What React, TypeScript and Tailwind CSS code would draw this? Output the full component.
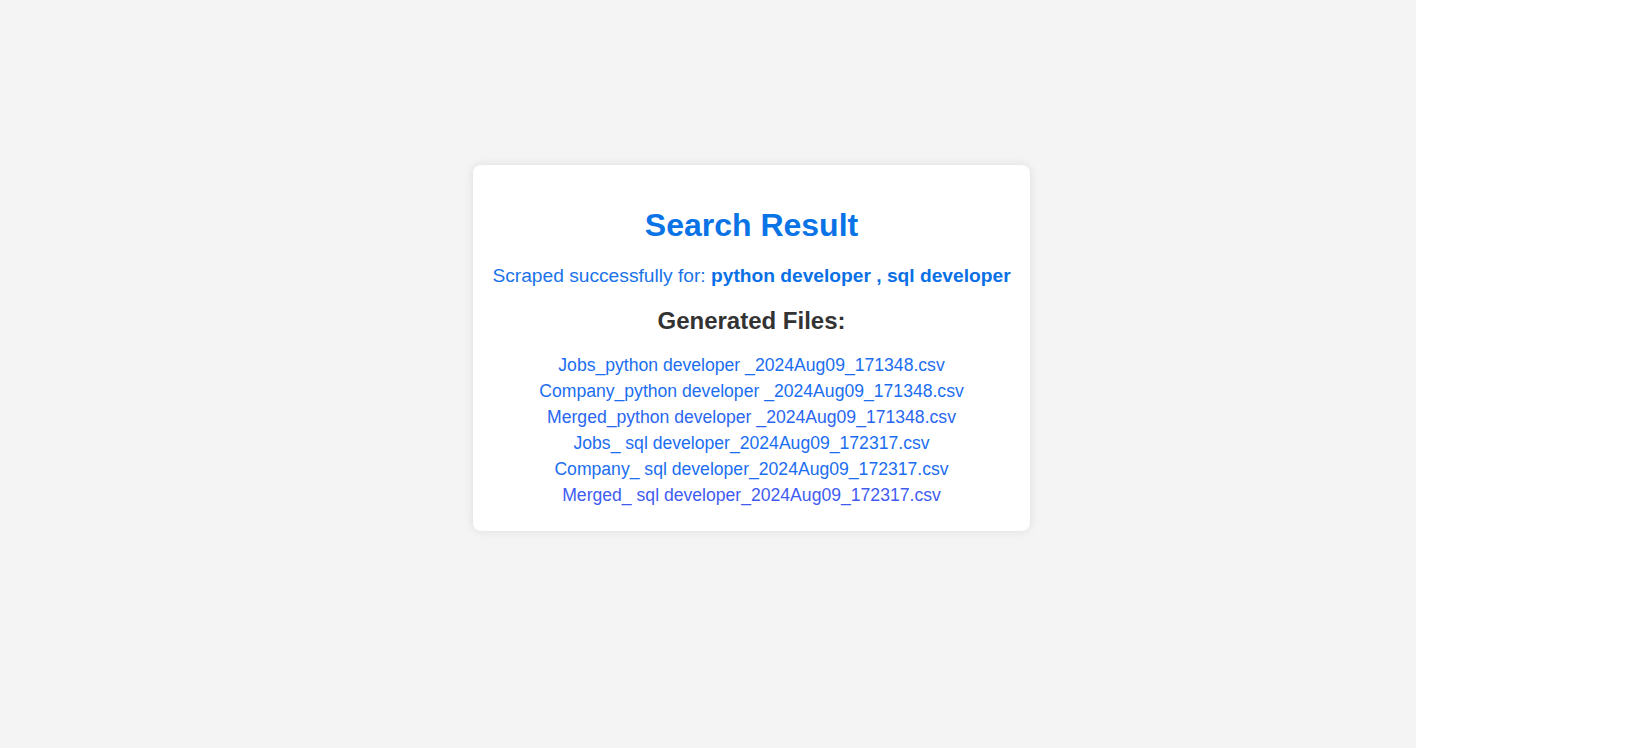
const files = [
  { name: 'Jobs_python developer _2024Aug09_171348.csv', color: 'text-[#1b6ef0]' },
  { name: 'Company_python developer _2024Aug09_171348.csv', color: 'text-[#1b6ef0]' },
  { name: 'Merged_python developer _2024Aug09_171348.csv', color: 'text-[#2a66f0]' },
  { name: 'Jobs_ sql developer_2024Aug09_172317.csv', color: 'text-[#1b6ef0]' },
  { name: 'Company_ sql developer_2024Aug09_172317.csv', color: 'text-[#1b6ef0]' },
  { name: 'Merged_ sql developer_2024Aug09_172317.csv', color: 'text-[#3f5cf2]' },
];

export default function App() {
  return (
    <div className="flex h-[748px] w-full bg-white font-['Liberation_Sans',Arial,sans-serif]">
      {/* page body */}
      <div className="h-full w-[1416px] bg-[#f4f4f4] pl-[473px] pt-[165px]">
        {/* result card */}
        <div className="w-[557px] rounded-lg bg-white px-5 pt-[21px] pb-[26px] text-center shadow-[0_0_10px_rgba(0,0,0,0.1)]">
          <h1 className="my-[21px] text-[32px] leading-[37px] font-bold text-[#0a73e6]">Search Result</h1>
          <p className="-mx-2 whitespace-nowrap text-[19.2px] leading-[22px] text-[#1a73e8]">
            Scraped successfully for: <strong className="font-bold text-[#0a70e6]">python developer , sql developer</strong>
          </p>
          <h2 className="mt-5 text-[24px] leading-[28px] font-bold text-[#333]">Generated Files:</h2>
          <ul className="mt-5 flex flex-col gap-[6.1px]">
            {files.map((f) => (
              <li key={f.name} className="text-[17.6px] leading-[20px]">
                <a href="#" className={f.color}>{f.name}</a>
              </li>
            ))}
          </ul>
        </div>
      </div>
    </div>
  );
}
